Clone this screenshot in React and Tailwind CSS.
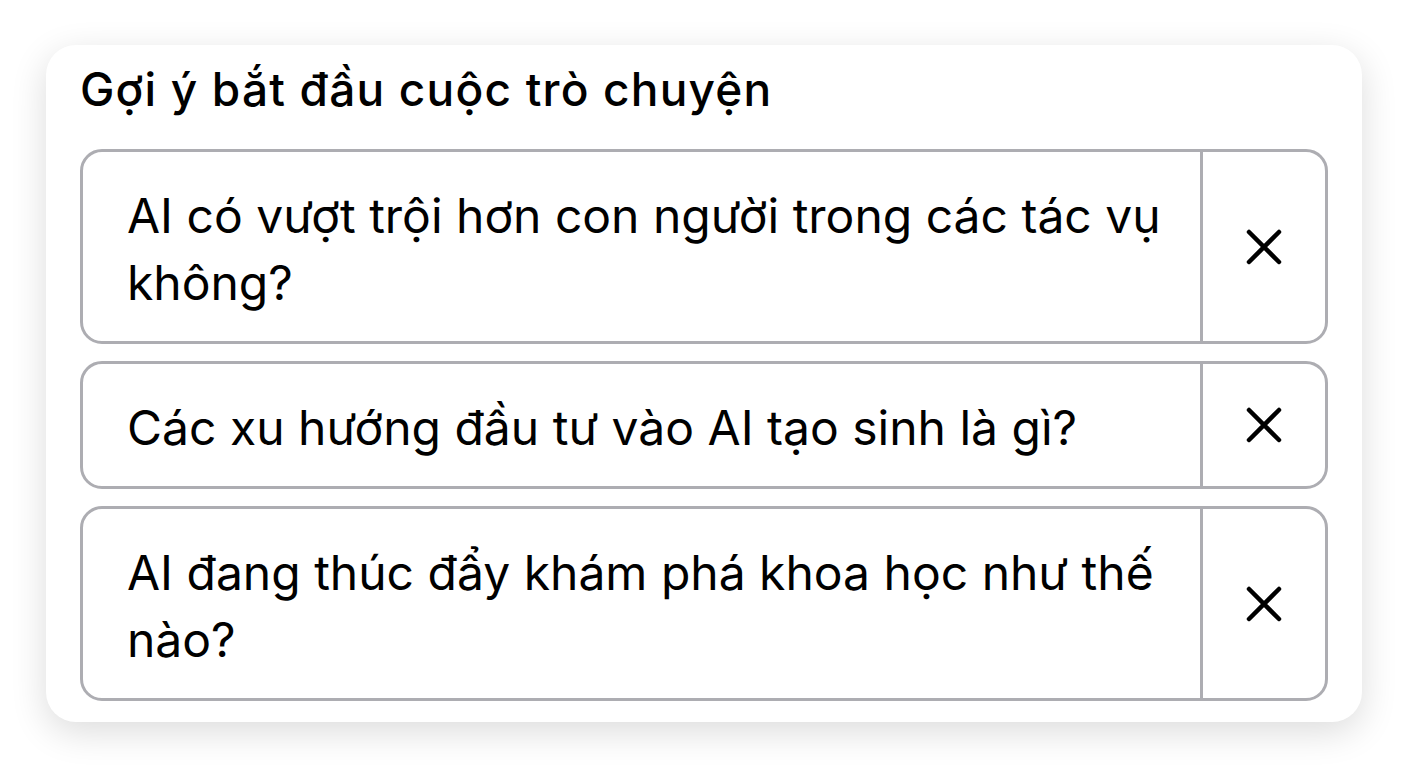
import React from 'react'

const suggestions = [
    "AI có vượt trội hơn con người trong các tác vụ không?",
    "Các xu hướng đầu tư vào AI tạo sinh là gì?",
    "AI đang thúc đẩy khám phá khoa học như thế nào?",
]

const CloseIcon = () => (
    <svg width="36" height="36" viewBox="0 0 36 36" fill="none">
        <path d="M3 3L33 33M33 3L3 33" stroke="#000" strokeWidth="4.5" strokeLinecap="round" />
    </svg>
)

const SuggestionRow = ({ text }) => (
    <div className="flex border-[3px] border-[#adadb2] rounded-[22px] bg-white">
        <div className="flex-1 pl-[44px] pr-[36px] pt-[30px] pb-[25px] text-[48px] leading-[67px] text-black">
            {text}
        </div>
        <div className="w-[125px] shrink-0 border-l-[3px] border-[#adadb2] flex items-center justify-center">
            <CloseIcon />
        </div>
    </div>
)

export default function App() {
    return (
        <div className="w-[1408px] h-[768px] bg-white pl-[46px] pt-[45px]" style={{ fontFamily: 'Inter, "Noto Sans", sans-serif' }}>
            <div className="w-[1316px] h-[677px] bg-white rounded-[30px] shadow-[0_10px_36px_rgba(0,0,0,0.14)] px-[34px] pt-[16px]">
                <h2 className="text-[46px] leading-[56px] font-medium tracking-[1.2px] text-black mb-[32px]">Gợi ý bắt đầu cuộc trò chuyện</h2>
                <div className="flex flex-col gap-[17px]">
                    {suggestions.map((s) => (
                        <SuggestionRow key={s} text={s} />
                    ))}
                </div>
            </div>
        </div>
    )
}
